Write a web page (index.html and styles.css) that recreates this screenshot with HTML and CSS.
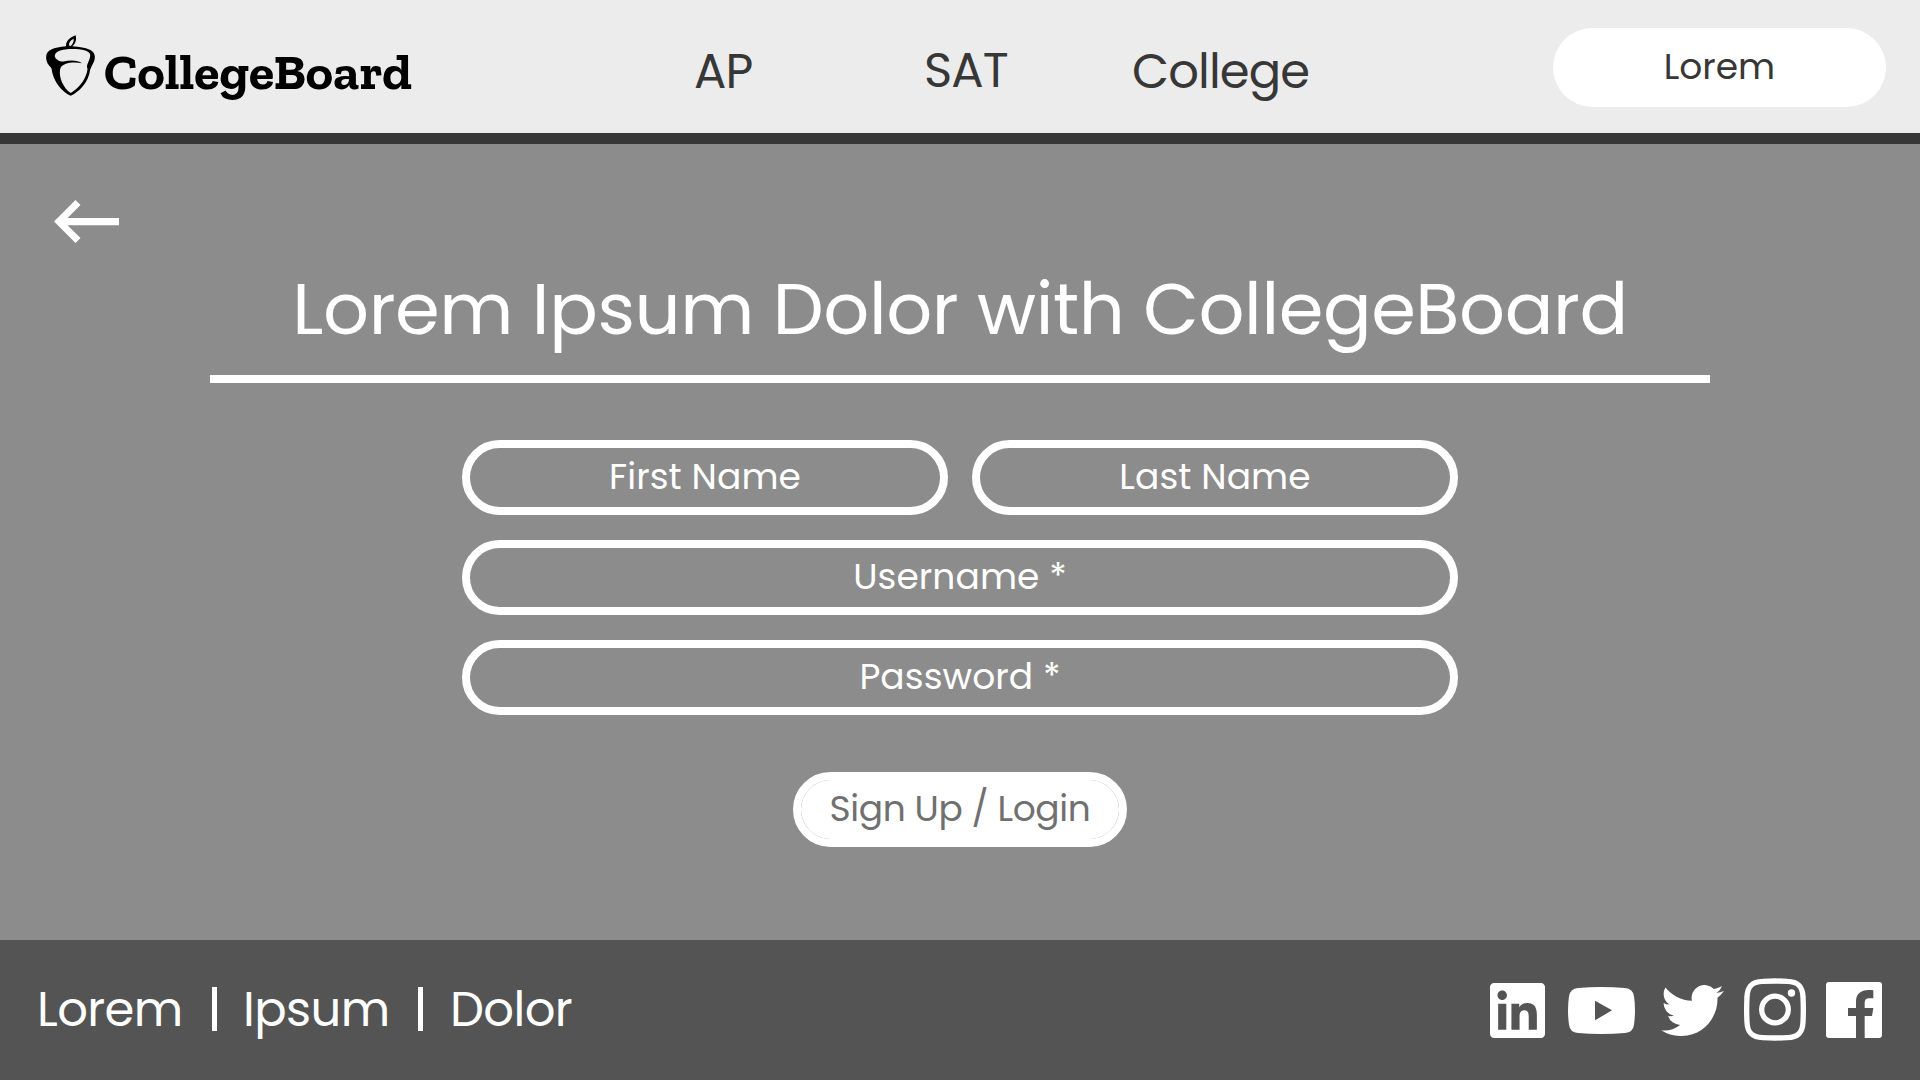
FILE: index.html
```html
<!DOCTYPE html>
<html lang="en">
<head>
<meta charset="utf-8">
<title>CollegeBoard</title>
<link rel="stylesheet" href="styles.css">
</head>
<body>
<header class="header">
  <a class="logo">
    <svg class="logo-mark" viewBox="48 46 150 184" aria-hidden="true">
      <path fill-rule="evenodd" d="M108 80C107 66 118 54 137 47C141 60 136 74 127 80C172 83 195 92 195 112C195 127 187 133 181 150C176 190 146 219 122 229C98 219 69 188 64 146C56 136 48 130 48 112C48 92 70 83 108 80ZM117 78C116 68 122 61 131 57C132 67 127 74 122 79ZM128 88C95 88 74 95 74 110C76 120 90 127 100 126C120 121 145 122 156 131C130 127 95 129 90 150C86 175 100 206 122 221C146 208 170 178 173 148C166 138 181 125 181 105C178 92 155 88 128 88Z"/>
    </svg>
    <svg class="logo-word" viewBox="0 0 310 60"><text x="0" y="42" textLength="308" lengthAdjust="spacingAndGlyphs">CollegeBoard</text></svg>
  </a>
  <nav class="nav">
    <a class="nav-ap">AP</a>
    <a class="nav-sat">SAT</a>
    <a class="nav-college">College</a>
  </nav>
  <button class="account">Lorem</button>
</header>
<main class="main">
  <svg class="back" viewBox="0 0 65 43" aria-label="Back"><path d="M0 21.500L21.500 0L26.500 5L13.500 18H65V25.300H13.500L26.500 38L21.500 43Z"/></svg>
  <h1 class="title">Lorem Ipsum Dolor with CollegeBoard</h1>
  <form class="form">
    <div class="names">
      <input class="field first" placeholder="First Name">
      <input class="field last" placeholder="Last Name">
    </div>
    <input class="field user" placeholder="Username *">
    <input class="field pass" placeholder="Password *">
    <button class="submit" type="button">Sign Up / Login</button>
  </form>
</main>
<footer class="footer">
  <div class="links">
    <a class="f-lorem">Lorem</a><i class="bar"></i><a class="f-ipsum">Ipsum</a><i class="bar"></i><a class="f-dolor">Dolor</a>
  </div>
  <div class="social">
    <svg class="linkedin" viewBox="0 0 24 24"><path d="M20.447 20.452h-3.554v-5.569c0-1.328-.027-3.037-1.852-3.037-1.853 0-2.136 1.445-2.136 2.939v5.667H9.351V9h3.414v1.561h.046c.477-.9 1.637-1.85 3.37-1.85 3.601 0 4.267 2.37 4.267 5.455v6.286zM5.337 7.433c-1.144 0-2.063-.926-2.063-2.065 0-1.138.92-2.063 2.063-2.063 1.14 0 2.064.925 2.064 2.063 0 1.139-.925 2.065-2.064 2.065zm1.782 13.019H3.555V9h3.564v11.452zM22.225 0H1.771C.792 0 0 .774 0 1.729v20.542C0 23.227.792 24 1.771 24h20.451C23.2 24 24 23.227 24 22.271V1.729C24 .774 23.2 0 22.222 0h.003z"/></svg>
    <svg class="youtube" viewBox="0 0 201 141"><path fill-rule="evenodd" d="M30 3Q100-3 171 3Q195 5 198 28Q204 70 198 113Q195 136 171 138Q100 144 30 138Q6 136 3 113Q-3 70 3 28Q6 5 30 3ZM81 41V100L132 70Z"/></svg>
    <svg class="twitter" viewBox="0 2.25 24 19.5"><path d="M23.953 4.57a10 10 0 01-2.825.775 4.958 4.958 0 002.163-2.723c-.951.555-2.005.959-3.127 1.184a4.92 4.92 0 00-8.384 4.482C7.69 8.095 4.067 6.13 1.64 3.162a4.822 4.822 0 00-.666 2.475c0 1.71.87 3.213 2.188 4.096a4.904 4.904 0 01-2.228-.616v.06a4.923 4.923 0 003.946 4.827 4.996 4.996 0 01-2.212.085 4.936 4.936 0 004.604 3.417 9.867 9.867 0 01-6.102 2.105c-.39 0-.779-.023-1.17-.067a13.995 13.995 0 007.557 2.209c9.053 0 13.998-7.496 13.998-13.985 0-.21 0-.42-.015-.63A9.935 9.935 0 0024 4.59z"/></svg>
    <svg class="instagram" viewBox="0 0 186 187"><path class="ring" d="M56 9Q93 7 130 9C162 10 176 24 177 56Q179 93 177 131C176 163 162 177 130 178Q93 180 56 178C24 177 10 163 9 131Q7 93 9 56C10 24 24 10 56 9Z"/><circle class="ring" cx="93" cy="93.500" r="40"/><circle cx="142.500" cy="44" r="11"/></svg>
    <svg class="facebook" viewBox="0 0 168 168"><path d="M9 0H159Q168 0 168 9V159Q168 168 159 168H116V102H138L142 78H116V62C116 53 121 49 129 49H142V25C110 20 90 31 90 59V78H66V102H90V168H9Q0 168 0 159V9Q0 0 9 0Z"/></svg>
  </div>
</footer>
</body>
</html>
```
FILE: styles.css
```css
* { box-sizing: border-box; }
body { margin: 0; width: 1920px; height: 1080px; display: flex; flex-direction: column; overflow: hidden; background: #8c8c8c; font-family: Poppins, Inter, sans-serif; font-feature-settings: "cv11"; color: #fff; }
input, button { font: inherit; font-feature-settings: inherit; outline: 0; }
svg { display: block; flex: none; fill: currentColor; }

.header { height: 144px; background: #ececec; border-bottom: 11px solid #373737; color: #373737; display: flex; align-items: flex-start; }
.logo { display: flex; flex: none; width: 694px; padding: 35px 0 0 46px; color: #000; }
.logo-mark { width: 50px; height: 61px; }
.logo-word { width: 310px; height: 60px; margin: 12px 0 0 8px; overflow: visible; font: bold 49px "Rockwell", "Roboto Slab", "Zilla Slab", "DejaVu Serif", serif; }
.nav { display: flex; font-size: 48px; letter-spacing: -0.9px; line-height: 56px; padding-top: 44px; white-space: nowrap; }
.nav-ap { width: 230px; }
.nav-sat { width: 208px; margin-top: -1px; }
.account { width: 333px; height: 79px; margin: 28px 34px 0 auto; padding: 0 0 2px; border: 0; border-radius: 40px; background: #fff; color: #373737; font-size: 36px; }

.main { flex: 1; display: flex; flex-direction: column; align-items: center; }
.back { align-self: flex-start; width: 65px; height: 43px; margin: 56px 0 0 54px; }
.title { width: 1500px; height: 140px; margin: 0; padding-top: 24px; border-bottom: 8px solid #fff; font-size: 72px; letter-spacing: -0.42px; font-weight: 400; line-height: 84px; text-align: center; white-space: nowrap; }
.form { width: 996px; margin-top: 57px; display: flex; flex-direction: column; gap: 25px; }
.names { display: grid; grid-template-columns: 1fr 1fr; gap: 24px; }
.field { width: 100%; height: 75px; padding: 0 0 2px; border: 8px solid #fff; border-radius: 38px; background: none; color: #fff; font-size: 36px; letter-spacing: 0.1px; text-align: center; }
.field::placeholder { color: #fff; opacity: 1; }
.submit { width: 334px; height: 75px; margin: 32px auto 0; padding: 0 0 2px; border: 8px solid #fff; border-radius: 38px; background: #fff; background-clip: padding-box; color: #707070; font-size: 36px; letter-spacing: -0.4px; white-space: nowrap; }

.footer { height: 140px; background: #545454; display: flex; justify-content: space-between; }
.links { display: flex; padding: 42px 0 0 37px; font-size: 48px; letter-spacing: -0.6px; line-height: 56px; }
.links a { white-space: nowrap; }
.f-lorem { width: 175px; }
.f-ipsum { width: 201px; padding-left: 26px; }
.f-dolor { padding-left: 27px; }
.bar { width: 5px; height: 44px; margin-top: 5px; background: #fff; }
.social { display: flex; align-items: center; padding: 0 38px 0 0; }
.linkedin { width: 55px; height: 55px; margin-right: 23px; }
.youtube { width: 67px; height: 47px; margin-right: 26px; }
.twitter { width: 63px; height: 51px; margin-right: 20px; }
.instagram { width: 62px; height: 63px; margin: -2px 20px 0 0; }
.ring { fill: none; stroke: #fff; stroke-width: 16px; }
.facebook { width: 56px; height: 56px; }
```
